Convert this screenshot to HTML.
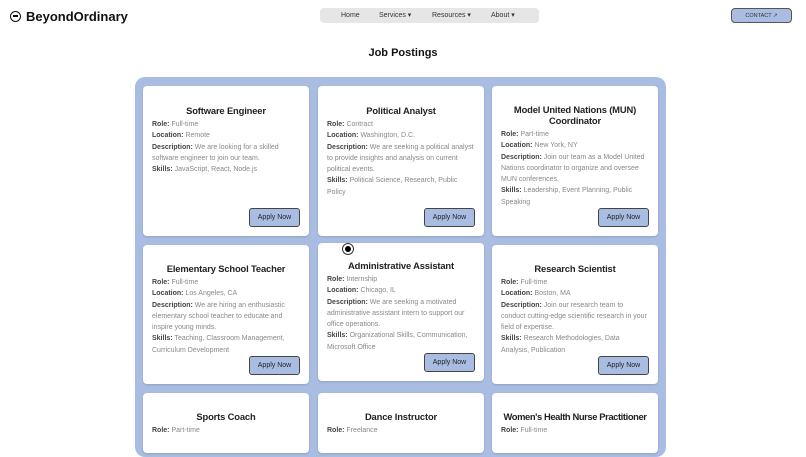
<!DOCTYPE html>
<html><head><meta charset="utf-8"><style>
*{margin:0;padding:0;box-sizing:border-box}
body{width:806px;height:439px;overflow:hidden;background:#fff;font-family:"Liberation Sans",sans-serif;color:#222;position:relative}
.logo{position:absolute;left:10px;top:9px;font-weight:bold;font-size:13px;color:#111;display:flex;align-items:center;gap:5px}
.logo i{display:inline-block;width:11px;height:11px;border:1.6px solid #111;border-radius:50%;position:relative}
.logo i:after{content:"";position:absolute;left:2px;right:2px;top:3px;height:1.5px;background:#111}
.nav{position:absolute;left:320px;top:8px;width:219px;height:15px;background:#e6e6e6;border-radius:4px;font-size:7px;color:#333}
.nav span{position:absolute;top:0;line-height:15px}
.contact{position:absolute;left:731px;top:8px;width:61px;height:15px;background:#a9bde3;border:1px solid #555;border-radius:4px;font-size:5.5px;color:#333;text-align:center;line-height:14px}
h1{position:absolute;top:47px;left:0;width:806px;text-align:center;font-size:11px;font-weight:bold;color:#111}
.wrap{position:absolute;left:135px;top:77px;width:531px;height:380px;background:#a9bde3;border-radius:10px}
.card{position:absolute;width:166px;background:#fff;border-radius:4px;padding:0 9px;box-shadow:0 1px 2px rgba(0,0,0,.15)}
.card h3{text-align:center;font-size:9.4px;font-weight:bold;color:#222;line-height:11px;letter-spacing:-0.15px;margin-bottom:3px}
.card p{font-size:7px;line-height:11.3px;color:#888}
.card b{color:#444}
.btn{position:absolute;right:9px;bottom:9px;width:51px;height:19px;background:#a9bde3;border:1px solid #444;border-radius:3px;font-size:7px;text-align:center;line-height:17px;color:#222}
.dot{position:absolute;left:342px;top:243px;width:12px;height:12px;border:1px solid #333;border-radius:50%;background:#fff}
.dot:after{content:"";position:absolute;left:2px;top:2px;width:6px;height:6px;border-radius:50%;background:#000}
</style></head><body>
<div class="logo"><i></i>BeyondOrdinary</div>
<div class="nav"><span style="left:21px">Home</span><span style="left:59px">Services ▾</span><span style="left:112px">Resources ▾</span><span style="left:171px">About ▾</span></div>
<div class="contact">CONTACT ↗</div>
<h1>Job Postings</h1>
<div class="wrap"></div>

<div class="card" style="left:143px;top:86px;height:150px;padding-top:19px">
<h3>Software Engineer</h3>
<p><b>Role:</b> Full-time<br><b>Location:</b> Remote<br><b>Description:</b> We are looking for a skilled software engineer to join our team.<br><b>Skills:</b> JavaScript, React, Node.js</p>
<div class="btn">Apply Now</div></div>

<div class="card" style="left:318px;top:86px;height:150px;padding-top:19px">
<h3>Political Analyst</h3>
<p><b>Role:</b> Contract<br><b>Location:</b> Washington, D.C.<br><b>Description:</b> We are seeking a political analyst to provide insights and analysis on current political events.<br><b>Skills:</b> Political Science, Research, Public Policy</p>
<div class="btn">Apply Now</div></div>

<div class="card" style="left:492px;top:86px;height:150px;padding-top:18px">
<h3>Model United Nations (MUN) Coordinator</h3>
<p><b>Role:</b> Part-time<br><b>Location:</b> New York, NY<br><b>Description:</b> Join our team as a Model United Nations coordinator to organize and oversee MUN conferences.<br><b>Skills:</b> Leadership, Event Planning, Public Speaking</p>
<div class="btn">Apply Now</div></div>

<div class="card" style="left:143px;top:245px;height:139px;padding-top:18px">
<h3>Elementary School Teacher</h3>
<p><b>Role:</b> Full-time<br><b>Location:</b> Los Angeles, CA<br><b>Description:</b> We are hiring an enthusiastic elementary school teacher to educate and inspire young minds.<br><b>Skills:</b> Teaching, Classroom Management, Curriculum Development</p>
<div class="btn">Apply Now</div></div>

<div class="card" style="left:318px;top:243px;height:138px;padding-top:17px">
<h3>Administrative Assistant</h3>
<p><b>Role:</b> Internship<br><b>Location:</b> Chicago, IL<br><b>Description:</b> We are seeking a motivated administrative assistant intern to support our office operations.<br><b>Skills:</b> Organizational Skills, Communication, Microsoft Office</p>
<div class="btn">Apply Now</div></div>

<div class="card" style="left:492px;top:245px;height:139px;padding-top:18px">
<h3>Research Scientist</h3>
<p><b>Role:</b> Full-time<br><b>Location:</b> Boston, MA<br><b>Description:</b> Join our research team to conduct cutting-edge scientific research in your field of expertise.<br><b>Skills:</b> Research Methodologies, Data Analysis, Publication</p>
<div class="btn">Apply Now</div></div>

<div class="card" style="left:143px;top:393px;height:60px;padding-top:18px">
<h3>Sports Coach</h3><p><b>Role:</b> Part-time</p></div>
<div class="card" style="left:318px;top:393px;height:60px;padding-top:18px">
<h3>Dance Instructor</h3><p><b>Role:</b> Freelance</p></div>
<div class="card" style="left:492px;top:393px;height:60px;padding-top:18px">
<h3 style="letter-spacing:-0.4px;white-space:nowrap">Women's Health Nurse Practitioner</h3><p><b>Role:</b> Full-time</p></div>
<div class="dot"></div>
</body></html>
